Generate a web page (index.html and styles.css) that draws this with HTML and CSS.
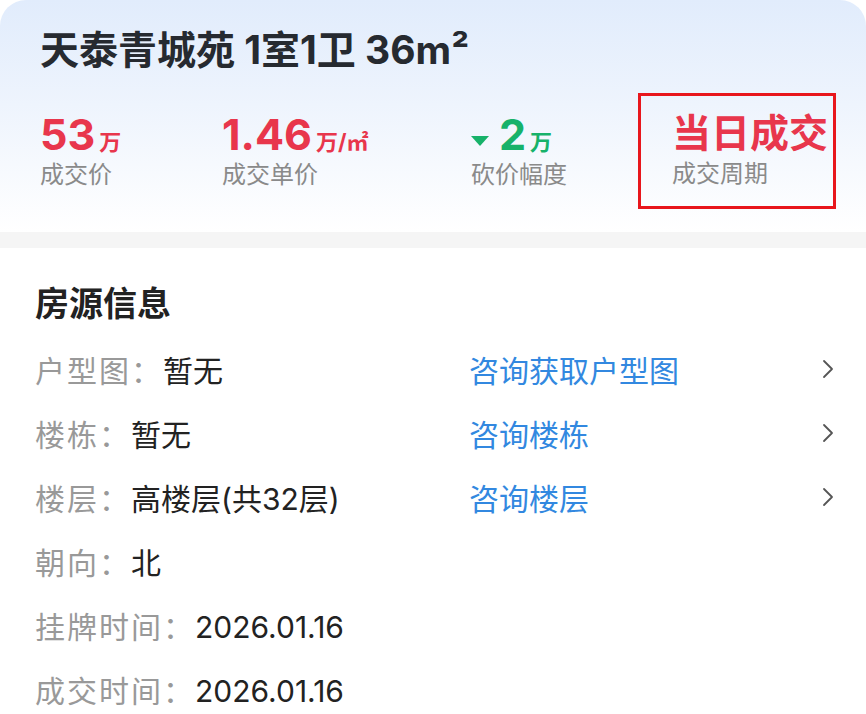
FILE: index.html
```html
<!DOCTYPE html>
<html lang="zh-CN">
<head>
    <title>天泰青城苑 成交详情</title>
    <meta charset="utf-8">
    <meta name="viewport" content="width=device-width, initial-scale=1">
    <link rel="stylesheet" href="styles.css">
</head>
<body>
<section class="deal-card">
    <h1 class="deal-title">天泰青城苑 1室1卫 36m²</h1>
    <div class="stats">
        <div class="stat stat-price">
            <div class="stat-value">53<span class="stat-unit">万</span></div>
            <div class="stat-label">成交价</div>
        </div>
        <div class="stat stat-unit-price">
            <div class="stat-value">1.46<span class="stat-unit">万/㎡</span></div>
            <div class="stat-label">成交单价</div>
        </div>
        <div class="stat stat-cut">
            <div class="stat-value stat-value-green">
                <svg class="arrow-down" width="18" height="10" viewBox="0 0 18 10"><path d="M0 0h18L9 10z" fill="#17b26a"/></svg>2<span class="stat-unit">万</span>
            </div>
            <div class="stat-label">砍价幅度</div>
        </div>
        <div class="stat stat-period">
            <div class="stat-value stat-value-text">当日成交</div>
            <div class="stat-label">成交周期</div>
        </div>
    </div>
</section>

<div class="divider"></div>

<section class="info">
    <h2 class="info-title">房源信息</h2>
    <div class="info-row">
        <div class="info-main"><span class="info-label">户型图：</span><span class="info-value">暂无</span></div>
        <a class="info-link" href="#">咨询获取户型图</a>
        <svg class="chevron" width="12" height="20" viewBox="0 0 12 20"><path d="M2 2l8 8-8 8" fill="none" stroke="#555" stroke-width="1.8" stroke-linecap="round" stroke-linejoin="round"/></svg>
    </div>
    <div class="info-row">
        <div class="info-main"><span class="info-label">楼栋：</span><span class="info-value">暂无</span></div>
        <a class="info-link" href="#">咨询楼栋</a>
        <svg class="chevron" width="12" height="20" viewBox="0 0 12 20"><path d="M2 2l8 8-8 8" fill="none" stroke="#555" stroke-width="1.8" stroke-linecap="round" stroke-linejoin="round"/></svg>
    </div>
    <div class="info-row">
        <div class="info-main"><span class="info-label">楼层：</span><span class="info-value">高楼层(共32层)</span></div>
        <a class="info-link" href="#">咨询楼层</a>
        <svg class="chevron" width="12" height="20" viewBox="0 0 12 20"><path d="M2 2l8 8-8 8" fill="none" stroke="#555" stroke-width="1.8" stroke-linecap="round" stroke-linejoin="round"/></svg>
    </div>
    <div class="info-row">
        <div class="info-main"><span class="info-label">朝向：</span><span class="info-value">北</span></div>
    </div>
    <div class="info-row">
        <div class="info-main"><span class="info-label">挂牌时间：</span><span class="info-value">2026.01.16</span></div>
    </div>
    <div class="info-row">
        <div class="info-main"><span class="info-label">成交时间：</span><span class="info-value">2026.01.16</span></div>
    </div>
</section>
</body>
</html>
```

FILE: styles.css
```css
*, *::before, *::after {
    margin: 0;
    padding: 0;
    box-sizing: border-box;
}

body {
    background-color: #ffffff;
    color: #222222;
    font-family: "Inter", "Noto Sans CJK SC", sans-serif;
    overflow: hidden;
}

.deal-card {
    height: 232px;
    padding: 24px 30px 0 40px;
    border-radius: 26px 26px 0 0;
    background: linear-gradient(180deg, #e1ecfc 0%, #eef4fd 45%, #ffffff 100%);
}

.deal-title {
    font-size: 39px;
    font-weight: 700;
    line-height: 52px;
    color: #262a30;
}

.stats {
    display: flex;
    align-items: center;
    margin-top: 17px;
}

.stat-price {
    width: 182px;
}

.stat-unit-price {
    width: 249px;
}

.stat-cut {
    width: 167px;
}

.stat-period {
    width: 198px;
    padding: 13px 0 15px 31px;
    border: 3px solid #e8161c;
}

.stat-value {
    display: flex;
    align-items: baseline;
    height: 48px;
    color: #e8364c;
    font-size: 43px;
    font-weight: 700;
    line-height: 48px;
}

.stat-value-green {
    color: #17b26a;
}

.stat-value-text {
    font-size: 39px;
}

.stat-unit {
    margin-left: 4px;
    font-size: 22px;
}

.arrow-down {
    align-self: center;
    margin: 14px 10px 0 0;
}

.stat-label {
    color: #8a8a8a;
    font-size: 24px;
    line-height: 34px;
}

.divider {
    height: 16px;
    background-color: #f5f5f5;
}

.info {
    padding: 34px 32px 0 35px;
}

.info-title {
    margin-bottom: 11px;
    font-size: 34px;
    font-weight: 700;
    line-height: 44px;
    color: #222222;
}

.info-row {
    display: flex;
    align-items: center;
    height: 64px;
    font-size: 30px;
}

.info-main {
    width: 434px;
    white-space: nowrap;
}

.info-label {
    color: #999999;
    letter-spacing: 2px;
}

.info-value {
    color: #222222;
}

.info-link {
    flex: 1;
    color: #3288e0;
    text-decoration: none;
}

.chevron {
    flex-shrink: 0;
}
```
